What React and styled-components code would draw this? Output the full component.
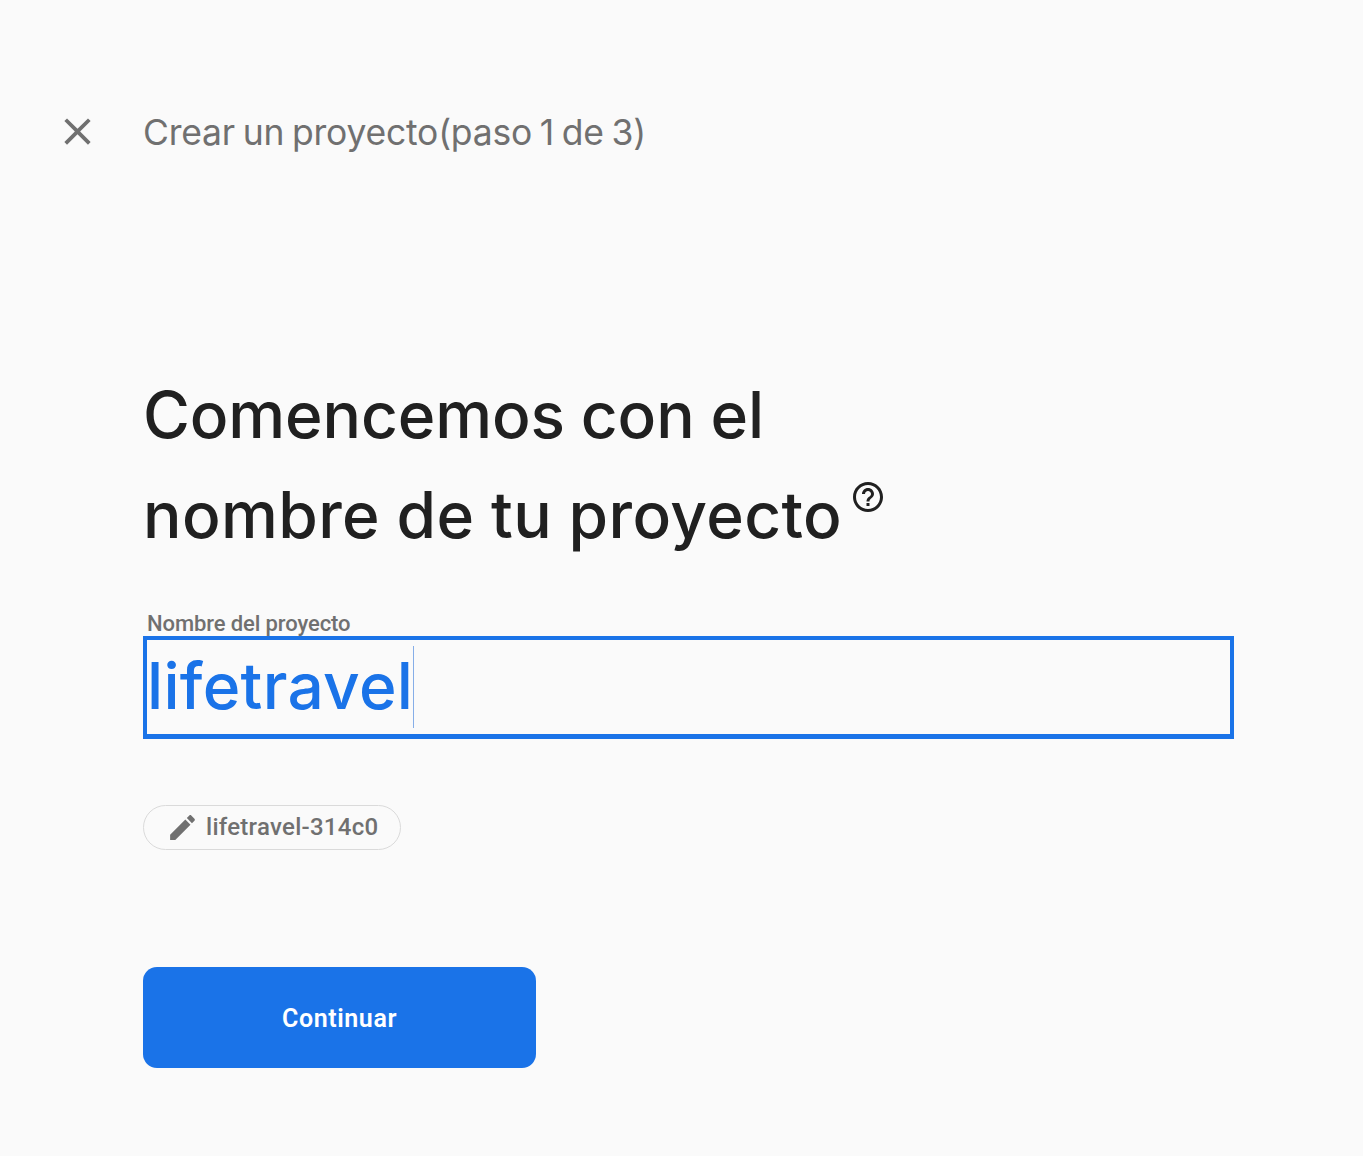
import React from "react";
import styled, { createGlobalStyle } from "styled-components";

const GlobalStyle = createGlobalStyle`
  *, *::before, *::after { box-sizing: border-box; }
  html, body { margin: 0; background: #fafafa; }
  body { font-family: Roboto, "Liberation Sans", sans-serif; }
`;

const Page = styled.div`
  display: flex;
  flex-direction: column;
  min-height: 1156px;
  background: #fafafa;
  padding: 106px 129px 0 55px;
`;

const Header = styled.header`
  display: flex;
  align-items: center;
  gap: 43px;
  height: 50px;
  color: #707070;
`;

const IconButton = styled.button`
  display: flex;
  padding: 0;
  border: 0;
  background: none;
  color: inherit;
`;

const Icon = styled.svg`
  display: block;
  flex: none;
  width: ${(p) => p.$size}px;
  height: ${(p) => p.$size}px;
  fill: currentColor;
`;

const StepTitle = styled.div`
  padding-top: 3px;
  font: 400 35.5px/50px Inter, sans-serif;
  letter-spacing: -0.22px;
  word-spacing: -2px;
  white-space: nowrap;
`;

const Main = styled.main`
  display: flex;
  flex-direction: column;
  align-items: flex-start;
  padding: 209px 0 0 88px;
`;

const Heading = styled.h1`
  margin: 0;
  color: #202020;
  font: 500 64px/99.5px Inter, sans-serif;
`;

const HeadingLine = styled.span`
  display: flex;
  align-items: flex-start;
  gap: 8px;
  letter-spacing: ${(p) => p.$tracking};
  word-spacing: -1px;
  white-space: nowrap;
`;

const HelpButton = styled(IconButton)`
  margin-top: 14px;
`;

const FieldLabel = styled.label`
  margin: 47px 0 0 4px;
  color: #707070;
  font-size: 22px;
  font-weight: 500;
  line-height: 26px;
  height: 25px;
  letter-spacing: -0.1px;
`;

const Field = styled.div`
  display: flex;
  align-items: center;
  width: 1091px;
  height: 103px;
  border: 4px solid #1a73e8;
  border-bottom-width: 5px;
  color: #1a73e8;
  font: 500 64px/88px Inter, sans-serif;
`;

const FieldValue = styled.span`
  padding-bottom: 2px;
  letter-spacing: 0.3px;
`;

const Caret = styled.span`
  width: 1px;
  height: 82px;
  background: #86aee8;
`;

const Chip = styled.button`
  display: flex;
  align-items: center;
  gap: 7px;
  width: 258px;
  height: 45px;
  margin: 66px 0 0;
  padding: 0 0 0 22px;
  border: 1px solid #dadada;
  border-radius: 23px;
  background: transparent;
  color: #707070;
  font: 500 24px/43px Roboto, sans-serif;
  letter-spacing: 0.27px;
`;

const PrimaryButton = styled.button`
  width: 393px;
  height: 101px;
  margin: 117px 0 0;
  padding: 2px 0 0;
  border: 0;
  border-radius: 14px;
  background: #1a73e8;
  color: #fff;
  font: 600 25px/99px Roboto, sans-serif;
  letter-spacing: 0.6px;
`;

export default function App() {
  return (
    <>
      <GlobalStyle />
      <Page>
        <Header>
          <IconButton aria-label="Cerrar">
            <Icon $size={45} viewBox="0 0 24 24">
              <path d="M19 6.41 17.59 5 12 10.59 6.41 5 5 6.41 10.59 12 5 17.59 6.41 19 12 13.41 17.59 19 19 17.59 13.41 12z" />
            </Icon>
          </IconButton>
          <StepTitle>Crear un proyecto(paso 1 de 3)</StepTitle>
        </Header>
        <Main>
          <Heading>
            <HeadingLine $tracking="-0.12px">Comencemos con el</HeadingLine>
            <HeadingLine $tracking="0.4px">
              nombre de tu proyecto
              <HelpButton aria-label="Ayuda">
                <Icon $size={36} viewBox="0 0 24 24">
                  <path d="M11 18h2v-2h-2v2zm1-16C6.48 2 2 6.48 2 12s4.48 10 10 10 10-4.48 10-10S17.52 2 12 2zm0 18c-4.41 0-8-3.59-8-8s3.59-8 8-8 8 3.59 8 8-3.59 8-8 8zm0-14c-2.21 0-4 1.79-4 4h2c0-1.1.9-2 2-2s2 .9 2 2c0 2-3 1.75-3 5h2c0-2.25 3-2.5 3-5 0-2.21-1.79-4-4-4z" />
                </Icon>
              </HelpButton>
            </HeadingLine>
          </Heading>
          <FieldLabel>Nombre del proyecto</FieldLabel>
          <Field>
            <FieldValue>lifetravel</FieldValue>
            <Caret />
          </Field>
          <Chip>
            <Icon $size={33} viewBox="0 0 24 24">
              <path d="M3 17.25V21h3.75L17.81 9.94l-3.75-3.75L3 17.25zM20.71 7.04c.39-.39.39-1.02 0-1.41l-2.34-2.34c-.39-.39-1.02-.39-1.41 0l-1.83 1.83 3.75 3.75 1.83-1.83z" />
            </Icon>
            lifetravel-314c0
          </Chip>
          <PrimaryButton>Continuar</PrimaryButton>
        </Main>
      </Page>
    </>
  );
}
